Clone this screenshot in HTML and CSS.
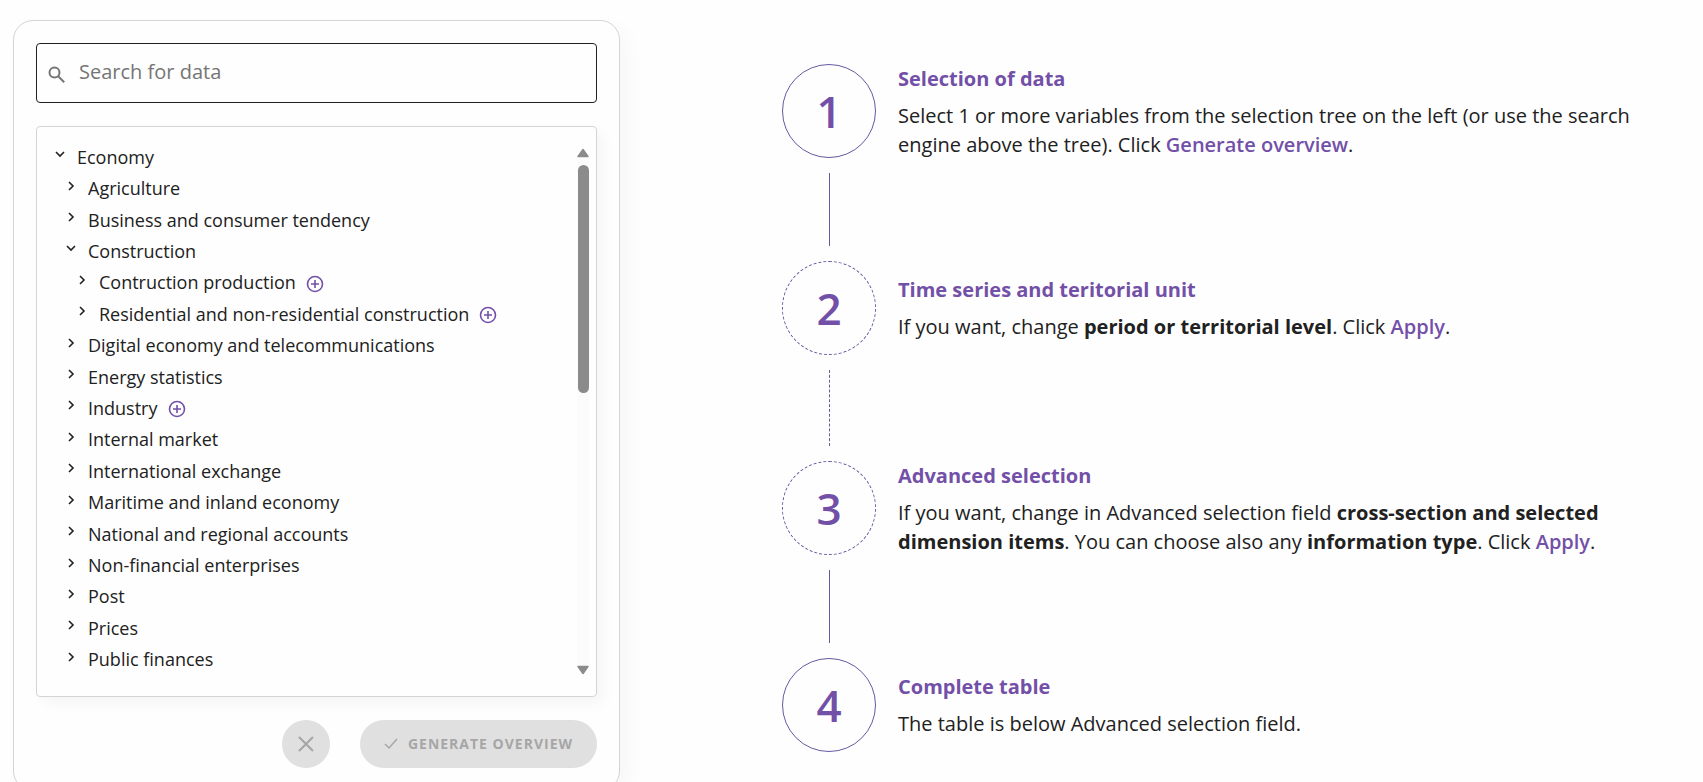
FILE: index.html
```html
<!DOCTYPE html>
<html lang="en">
<head>
    <meta charset="utf-8">
    <title>Data selection</title>
    <link rel="stylesheet" href="styles.css">
</head>
<body>
    <svg class="symbols" aria-hidden="true">
        <symbol id="right" viewBox="0 0 12 12"><path d="M4 2l4 4-4 4"/></symbol>
        <symbol id="down" viewBox="0 0 12 12"><path d="M2 4l4 4 4-4"/></symbol>
        <symbol id="plus" viewBox="0 0 18 18"><circle cx="9" cy="9" r="7.5"/><path d="M9 5v8M5 9h8"/></symbol>
    </svg>
    <main class="page">
        <form class="panel">
            <div class="search">
                <svg class="search-icon" viewBox="0 0 18 18" aria-hidden="true"><circle cx="6.5" cy="6.5" r="5"/><path d="M10.2 10.2l6 6"/></svg>
                <input class="search-input" type="text" placeholder="Search for data" aria-label="Search for data">
            </div>
            <div class="tree">
                <ul class="tree-list">
                    <li class="node"><button type="button" class="toggle"><svg class="chevron"><use href="#down"/></svg>Economy</button></li>
                    <li class="node level1"><button type="button" class="toggle"><svg class="chevron"><use href="#right"/></svg>Agriculture</button></li>
                    <li class="node level1"><button type="button" class="toggle"><svg class="chevron"><use href="#right"/></svg>Business and consumer tendency</button></li>
                    <li class="node level1"><button type="button" class="toggle"><svg class="chevron"><use href="#down"/></svg>Construction</button></li>
                    <li class="node level2"><button type="button" class="toggle"><svg class="chevron"><use href="#right"/></svg>Contruction production</button><button type="button" class="add" aria-label="Add Contruction production"><svg class="plus"><use href="#plus"/></svg></button></li>
                    <li class="node level2"><button type="button" class="toggle"><svg class="chevron"><use href="#right"/></svg>Residential and non-residential construction</button><button type="button" class="add" aria-label="Add Residential and non-residential construction"><svg class="plus"><use href="#plus"/></svg></button></li>
                    <li class="node level1"><button type="button" class="toggle"><svg class="chevron"><use href="#right"/></svg>Digital economy and telecommunications</button></li>
                    <li class="node level1"><button type="button" class="toggle"><svg class="chevron"><use href="#right"/></svg>Energy statistics</button></li>
                    <li class="node level1"><button type="button" class="toggle"><svg class="chevron"><use href="#right"/></svg>Industry</button><button type="button" class="add" aria-label="Add Industry"><svg class="plus"><use href="#plus"/></svg></button></li>
                    <li class="node level1"><button type="button" class="toggle"><svg class="chevron"><use href="#right"/></svg>Internal market</button></li>
                    <li class="node level1"><button type="button" class="toggle"><svg class="chevron"><use href="#right"/></svg>International exchange</button></li>
                    <li class="node level1"><button type="button" class="toggle"><svg class="chevron"><use href="#right"/></svg>Maritime and inland economy</button></li>
                    <li class="node level1"><button type="button" class="toggle"><svg class="chevron"><use href="#right"/></svg>National and regional accounts</button></li>
                    <li class="node level1"><button type="button" class="toggle"><svg class="chevron"><use href="#right"/></svg>Non-financial enterprises</button></li>
                    <li class="node level1"><button type="button" class="toggle"><svg class="chevron"><use href="#right"/></svg>Post</button></li>
                    <li class="node level1"><button type="button" class="toggle"><svg class="chevron"><use href="#right"/></svg>Prices</button></li>
                    <li class="node level1"><button type="button" class="toggle"><svg class="chevron"><use href="#right"/></svg>Public finances</button></li>
                </ul>
                <div class="scrollbar" aria-hidden="true">
                    <svg class="arrow" viewBox="0 0 12 10"><path d="M6 1.5L11 8.5H1z"/></svg>
                    <div class="track"><div class="thumb"></div></div>
                    <svg class="arrow" viewBox="0 0 12 10"><path d="M6 8.5L1 1.5h10z"/></svg>
                </div>
            </div>
            <div class="actions">
                <button type="button" class="button clear" aria-label="Clear" disabled><svg class="cross" viewBox="0 0 18 18"><path d="M2 2l14 14M16 2L2 16"/></svg></button>
                <button type="button" class="button generate" disabled><svg class="check" viewBox="0 0 14 14"><path d="M1 8l4 4 8-9"/></svg>GENERATE OVERVIEW</button>
            </div>
        </form>
        <ol class="steps">
            <li class="step">
                <span class="number">1</span>
                <div class="text">
                    <h2>Selection of data</h2>
                    <p>Select 1 or more variables from the selection tree on the left (or use the search engine above the tree). Click <em>Generate overview</em>.</p>
                </div>
            </li>
            <li class="step optional">
                <span class="number">2</span>
                <div class="text">
                    <h2>Time series and teritorial unit</h2>
                    <p>If you want, change <strong>period or territorial level</strong>. Click <em>Apply</em>.</p>
                </div>
            </li>
            <li class="step optional last-optional">
                <span class="number">3</span>
                <div class="text">
                    <h2>Advanced selection</h2>
                    <p>If you want, change in Advanced selection field <strong>cross-section and selected dimension items</strong>. You can choose also any <strong>information type</strong>. Click <em>Apply</em>.</p>
                </div>
            </li>
            <li class="step">
                <span class="number">4</span>
                <div class="text">
                    <h2>Complete table</h2>
                    <p>The table is below Advanced selection field.</p>
                </div>
            </li>
        </ol>
    </main>
</body>
</html>
```
FILE: styles.css
```css
* {
    box-sizing: border-box;
}
body {
    margin: 0;
    background: #fefefe;
    color: #212121;
    font-family: "Open Sans", sans-serif;
    overflow: hidden;
}
button {
    font-family: inherit;
    border: 0;
    padding: 0;
    background: none;
    color: inherit;
}
svg {
    fill: none;
    stroke: currentColor;
    flex: none;
}
.symbols {
    display: none;
}
.page {
    display: grid;
    grid-template-columns: 11fr 16fr;
    column-gap: 162px;
    align-items: start;
    padding: 20px 38px 0 13px;
}

/* left panel */
.panel {
    display: flex;
    flex-direction: column;
    gap: 23px;
    padding: 22px;
    border: 1px solid #d4d4d4;
    border-radius: 20px;
    box-shadow: 8px 8px 20px rgba(0, 0, 0, 0.03);
}
.search {
    display: flex;
    align-items: center;
    gap: 13px;
    height: 60px;
    padding: 0 11px;
    border: 1px solid #212121;
    border-radius: 4px;
}
.search-icon {
    width: 18px;
    height: 18px;
    margin-top: 3px;
    color: #757575;
    stroke-width: 2;
}
.search-input {
    flex: 1;
    min-width: 0;
    border: 0;
    outline: 0;
    padding: 0 0 4px;
    background: none;
    font: 20px "Open Sans", sans-serif;
}
.search-input::placeholder {
    color: #757575;
}
.tree {
    display: flex;
    justify-content: space-between;
    padding: 14px 7px 21px 17px;
    border: 1px solid #d4d4d4;
    border-radius: 4px;
    box-shadow: 6px 6px 14px rgba(0, 0, 0, 0.04);
}
.tree-list {
    display: grid;
    grid-auto-rows: 1fr;
    height: 534px;
    margin: 0;
    padding: 0;
    list-style: none;
}
.node {
    display: flex;
    align-items: center;
    gap: 10px;
}
.level1 {
    padding-left: 11px;
}
.level2 {
    padding-left: 22px;
}
.toggle {
    display: flex;
    align-items: center;
    gap: 11px;
    font-size: 18px;
    line-height: 26px;
    white-space: nowrap;
}
.chevron {
    width: 12px;
    height: 12px;
    margin-bottom: 5px;
    stroke-width: 1.6;
}
.add {
    display: flex;
    margin-top: 3px;
    color: #7350a8;
}
.plus {
    width: 18px;
    height: 18px;
    stroke-width: 1.6;
}
.scrollbar {
    display: flex;
    flex-direction: column;
    width: 12px;
    padding-top: 7px;
}
.arrow {
    width: 12px;
    height: 10px;
    fill: #8b8b8b;
    stroke: #8b8b8b;
    stroke-width: 1.5;
    stroke-linejoin: round;
}
.track {
    flex: 1;
    padding: 7px 0 0 1px;
    background: #fbfbfb;
}
.thumb {
    width: 11px;
    height: 228px;
    border-radius: 6px;
    background: #8b8b8b;
}
.actions {
    display: flex;
    justify-content: flex-end;
    gap: 30px;
}
.button {
    display: flex;
    align-items: center;
    justify-content: center;
    height: 48px;
    border-radius: 24px;
    background: #e0e0e0;
    color: #a6a6a6;
}
.clear {
    width: 48px;
}
.cross {
    width: 18px;
    height: 18px;
    stroke-width: 2;
}
.generate {
    gap: 10px;
    padding: 0 24px 2px;
    font-size: 14px;
    font-weight: 700;
    letter-spacing: 1px;
}
.check {
    width: 14px;
    height: 14px;
    stroke-width: 1.5;
}

/* numbered steps */
.steps {
    margin: 0;
    padding: 44px 0 0;
    list-style: none;
}
.step {
    display: grid;
    grid-template-columns: 94px 1fr;
    grid-template-rows: 94px;
    column-gap: 22px;
    align-items: center;
}
.step:not(:last-child)::after {
    content: "";
    justify-self: center;
    height: 73px;
    margin: 15px 0;
    border-left: 1px solid #6659a0;
}
.number {
    display: flex;
    align-items: center;
    justify-content: center;
    height: 94px;
    border: 1px solid #6659a0;
    border-radius: 50%;
    color: #7350a8;
    font-size: 44px;
    font-weight: 600;
}
.optional .number {
    border-style: dashed;
}
.step.optional:not(.last-optional)::after {
    height: 76px;
    border-left-style: dashed;
}
.text {
    font-size: 20px;
    line-height: 29px;
}
.text h2 {
    margin: 0 0 8px;
    color: #7350a8;
    font-size: 20px;
    line-height: 29px;
    font-weight: 700;
}
.text p {
    margin: 0;
}
.text em {
    color: #7350a8;
    font-style: normal;
    font-weight: 600;
}
```
